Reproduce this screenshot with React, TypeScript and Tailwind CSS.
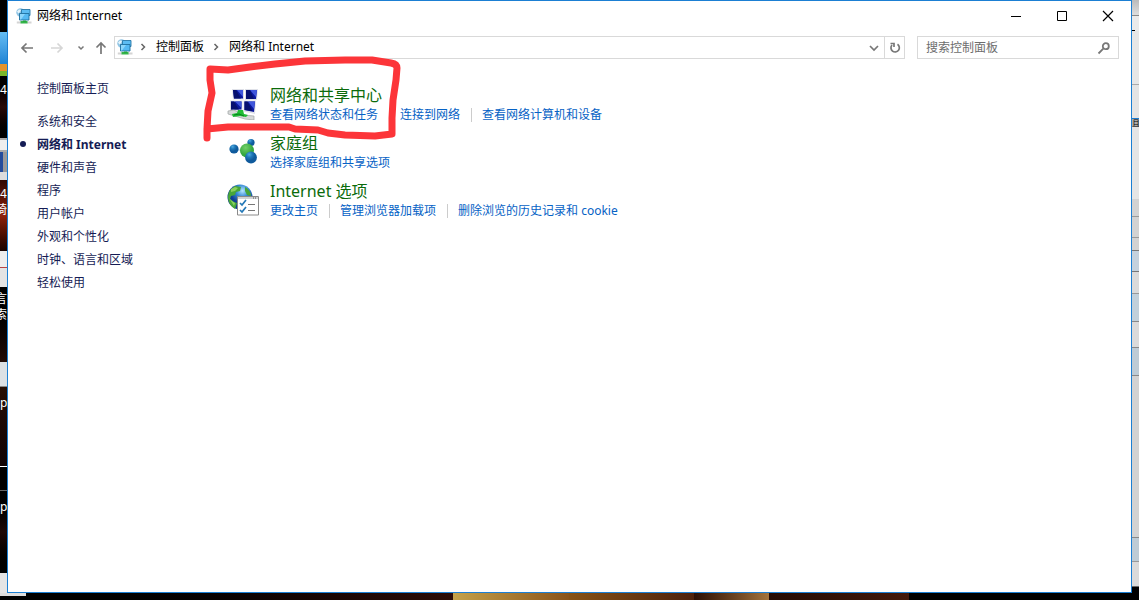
import type { ReactNode } from "react";

function NetworkIcon() {
  return (
    <svg viewBox="0 0 16 16" className="size-4 shrink-0" aria-hidden="true">
      <circle cx="4.5" cy="4.5" r="4.2" fill="#8fc4e4" />
      <path d="M1 3.5 3 1.5l2 .6-1 1.8-1.600 1.500zM3 6.500h2v1.500z" fill="#e6f4fb" />
      <path d="M.8 13.500h4v2h-4zM11 13.500h4.500v2H11z" fill="#d4d4d4" />
      <path d="M4.500 13h7v2.500h-7z" fill="#35b44a" />
      <path d="M5.500 1.500h8.500v6H5.500z" fill="#5cbcf2" stroke="#2878a8" strokeWidth=".9" />
      <path d="M3.500 5.500h9.500v6.500H3.500z" fill="#55b9f2" stroke="#20709f" strokeWidth=".9" />
      <path d="M4 6h5l-4 5.500H4z" fill="#8cd6fb" />
      <path d="M7 12.500h3V14H7z" fill="#27a83f" />
    </svg>
  );
}

function SharingCenterIcon() {
  return (
    <svg viewBox="0 2 32 32" className="size-8 shrink-0" aria-hidden="true">
      <path d="M5 3h12v10.500H6zM18 3h13l-1 11H18zM3 14.500h12.500V25H3zM16.500 14.500H29L28 28l-11.500-2.500z" fill="#dfe1e8" />
      <path d="M6 4h10v8.500H7zM19 4h11l-1 9H19zM4 15.500h10.500v8H4zM17.500 15.500H28l-1 10.500-9.500-2z" fill="#0a189f" />
      <path d="m10 4 6 0v7zM23 4h7l-1 7zM8 15.500h6.500V22zM21 15.500h7l-1 7.500z" fill="#3f56dc" />
      <path d="m6 4 3 0 5 8.500H7zM19 4l4 0 4 9h-8zM4 15.500h3l5 8H4zM17.500 15.500h3l5 9.500-8-1z" fill="#06106f" />
      <path d="m1 25 6-1 9 5 11 1v4l-9-1L1 28z" fill="#d6d8d8" stroke="#9fa4a4" strokeWidth=".7" />
      <path d="m5 28 5-1 1-3h5l1 4 4 1-2 2-6-1-7 1z" fill="#20bd35" />
      <path d="m7 29 5-1 5 2" stroke="#08801c" fill="none" />
    </svg>
  );
}

function HomegroupIcon() {
  return (
    <svg viewBox="0 0 32 32" className="size-8 shrink-0" aria-hidden="true">
      <defs>
        <radialGradient id="hg-blue" cx=".35" cy=".25">
          <stop offset="0" stopColor="#4fa9df" />
          <stop offset=".5" stopColor="#1f78b8" />
          <stop offset="1" stopColor="#0f5a9c" />
        </radialGradient>
        <radialGradient id="hg-green" cx=".4" cy=".3">
          <stop offset="0" stopColor="#73cf68" />
          <stop offset="1" stopColor="#35a83f" />
        </radialGradient>
      </defs>
      <path d="m7 13 12 2 5-9M19 15l6 7" stroke="#d5e9ef" strokeWidth="2" fill="none" />
      <circle cx="7" cy="13" r="4.600" fill="url(#hg-blue)" />
      <circle cx="24" cy="6.500" r="3.600" fill="url(#hg-blue)" />
      <circle cx="20" cy="14.500" r="7" fill="url(#hg-green)" />
      <circle cx="24" cy="21.500" r="5.900" fill="url(#hg-blue)" />
    </svg>
  );
}

function InternetOptionsIcon() {
  return (
    <svg viewBox="0 0 32 32" className="size-8 shrink-0" aria-hidden="true">
      <defs>
        <radialGradient id="globe" cx=".6" cy=".25">
          <stop offset="0" stopColor="#b8e8ff" />
          <stop offset=".5" stopColor="#3689d5" />
          <stop offset="1" stopColor="#103e92" />
        </radialGradient>
      </defs>
      <circle cx="13" cy="13" r="12.500" fill="url(#globe)" />
      <path d="m3 6 5-4 6 1-1 4-4 1-1 3-4 1-1 3 4 3 3 1-2 6C3 22 1 17 1 13c0-3 1-5 2-7ZM18 3c4 2 6 6 6 9l-4-1-2-4z" fill="#47a638" />
      <path d="m4 5 4-2 3 1-3 3-4 1zM2 14l3 3 3 2-1 3z" fill="#8bd15c" />
      <path d="M10.500 12.500h21v18.500h-21z" fill="#fff" stroke="#8a8a8a" />
      <path d="M11 13h20v2H11z" fill="#d1d3d5" />
      <path d="M26 14h1M28 14h1" stroke="#555" />
      <path d="m13 19 2 2 4-5M13 26l2 2 4-5" fill="none" stroke="#2378b7" strokeWidth="1.700" />
      <path d="M21 20.500h7M21 26.500h7" stroke="#777" strokeWidth="1" />
    </svg>
  );
}

function Glyph({ d, className = "", width = 1.7 }: { d: string; className?: string; width?: number }) {
  return (
    <svg viewBox="0 0 16 16" className={`size-4 shrink-0 ${className}`} fill="none" stroke="currentColor" strokeWidth={width} aria-hidden="true">
      <path d={d} />
    </svg>
  );
}

const crumbArrow = "m6.500 5 3 3-3 3";

const navigation = [
  "系统和安全",
  "网络和 Internet",
  "硬件和声音",
  "程序",
  "用户帐户",
  "外观和个性化",
  "时钟、语言和区域",
  "轻松使用",
];

const categories: { title: string; icon: ReactNode; links: string[] }[] = [
  { title: "网络和共享中心", icon: <SharingCenterIcon />, links: ["查看网络状态和任务", "连接到网络", "查看网络计算机和设备"] },
  { title: "家庭组", icon: <HomegroupIcon />, links: ["选择家庭组和共享选项"] },
  { title: "Internet 选项", icon: <InternetOptionsIcon />, links: ["更改主页", "管理浏览器加载项", "删除浏览的历史记录和 cookie"] },
];

function RedMarker() {
  return (
    <svg viewBox="200 54 204 92" className="pointer-events-none absolute -top-[5px] left-[192px] h-[92px] w-[204px]" aria-hidden="true">
      <path
        d="M207 138 207 129 208 111 212 93 210 80 210 69 228 70 250 67 275 64 305 61 345 60 372 60 391 63Q397 64 397 68L396 80 393 100 392 118 392 134 375 136 345 135 328 133 318 130 295 129 289 127 228 127 207 129"
        fill="none"
        stroke="#fc3539"
        strokeWidth="7"
        strokeLinecap="round"
        strokeLinejoin="round"
      />
    </svg>
  );
}

function DesktopLeft() {
  return (
    <div className="flex w-[7px] shrink-0 flex-col overflow-hidden bg-black text-[12px] leading-[16px] text-white">
      <div className="h-8 shrink-0" />
      <div className="h-8 shrink-0 bg-linear-to-b from-[#65bdf3] to-[#1c83d4]" />
      <div className="h-[7px] shrink-0 bg-[#e5932a]" />
      <div className="h-[5px] shrink-0 bg-[#79b72b]" />
      <div className="h-[62px] shrink-0 bg-linear-to-b from-black via-[#290a06] to-black pt-1.5">4</div>
      <div className="h-[14px] shrink-0 border-y-2 border-[#aaa] bg-[#eee]" />
      <div className="h-5 shrink-0 border-r-4 border-[#999] bg-[#244c9c]" />
      <div className="h-2 shrink-0 bg-[#ddd]" />
      <div className="h-[71px] shrink-0 bg-linear-to-b from-[#300803] via-[#8f210c] to-[#180300] pt-1.5">
        <p>4</p>
        <p className="flex justify-end">琦</p>
      </div>
      <div className="h-[17px] shrink-0 border-b border-[#b84444] bg-[#eee]" />
      <div className="h-[19px] shrink-0 bg-[#e4e4e4]" />
      <div className="h-[75px] shrink-0 bg-linear-to-b from-black to-[#220c07] pt-1">
        <p className="flex justify-end">言</p>
        <p className="flex justify-end">索</p>
      </div>
      <div className="h-[25px] shrink-0 border-b border-[#888] bg-[#dce1e5]" />
      <div className="h-[79px] shrink-0 bg-linear-to-b from-[#260f05] to-[#100303] pt-2">p</div>
      <div className="h-[25px] shrink-0 border-y border-t-white border-b-[#666] bg-black" />
      <div className="h-[82px] shrink-0 bg-linear-to-b from-black via-[#1e0807] to-black pt-2">p</div>
      <div className="grow bg-[#e5e5e5]" />
    </div>
  );
}

function DesktopRight() {
  return (
    <div className="flex w-[7px] shrink-0 flex-col overflow-hidden bg-[#d2d2d2]">
      <div className="h-4 shrink-0 border-b border-[#888] bg-linear-to-b from-[#bbb] to-[#ddd]" />
      <div className="h-[15px] shrink-0 bg-[#eaeaea] pt-[14px]"><div className="h-px w-[3px] bg-black" /></div>
      <div className="h-[54px] shrink-0 border-b border-[#aaa] bg-[#e6e6e6]" />
      <div className="h-[34px] shrink-0 border-b border-[#1b7bcf] bg-[#e4e4e4]" />
      <div className="h-2 shrink-0 overflow-hidden bg-[#aaa] text-[8px] leading-[8px]">且</div>
      <div className="h-[72px] shrink-0 bg-[#e5e5e5]" />
      <div className="h-[18px] shrink-0 border-b border-[#999]" />
      <div className="h-[21px] shrink-0 border-b border-[#999]" />
      <div className="h-[13px] shrink-0 border-b border-[#777]" />
      <div className="h-[21px] shrink-0 border-b border-[#777] bg-[#c4d1dd]" />
      <div className="h-[22px] shrink-0 border-b border-[#999] bg-[#dadada]" />
      <div className="h-7 shrink-0 border-b border-[#888] bg-[#c2d0da]" />
      <div className="h-[26px] shrink-0 border-b border-[#888] bg-[#dadada]" />
      <div className="h-7 shrink-0 border-b border-[#888] bg-[#bdcbd5]" />
      <div className="h-[162px] shrink-0 border-b border-[#888]" />
      <div className="h-6 shrink-0 border-b border-[#999] bg-[#bdcbd5]" />
      <div className="h-[25px] shrink-0 border-b border-[#666] bg-[#dadada]" />
      <div className="grow bg-black" />
    </div>
  );
}

export default function App() {
  return (
    <div className="flex h-screen flex-col bg-black font-['Noto_Sans','Noto_Sans_CJK_SC',sans-serif] text-[12px]">
      <div className="flex min-h-0 flex-1">
        <DesktopLeft />
        <div className="flex min-w-0 flex-1 flex-col border border-[#1b7fd3] bg-white">
          <header className="flex h-[35px] shrink-0 items-start">
            <div className="flex h-[29px] flex-1 items-center pl-2">
              <NetworkIcon />
              <h1 className="ml-[5px] text-black">网络和 Internet</h1>
            </div>
            <div className="flex h-[29px] text-black">
              <button aria-label="最小化" className="flex w-[46px] items-center justify-center">
                <Glyph d="M3 8.500h10" width={1} />
              </button>
              <button aria-label="最大化" className="flex w-[46px] items-center justify-center">
                <Glyph d="M3.500 3.500h9v9h-9z" width={1} />
              </button>
              <button aria-label="关闭" className="flex w-[46px] items-center justify-center">
                <Glyph d="m3 3 10 10M13 3 3 13" width={1.2} />
              </button>
            </div>
          </header>

          <nav className="flex h-[23px] shrink-0 items-stretch pr-3" aria-label="地址栏">
            <div className="flex w-[106px] items-center pl-[11px] text-[#777]">
              <button aria-label="后退"><Glyph d="M14 8H3m4.500-4.500L3 8l4.500 4.500" /></button>
              <button aria-label="前进" className="ml-3.5 text-[#d6d6d6]"><Glyph d="M2 8h11M8.500 3.500 13 8l-4.500 4.500" /></button>
              <button aria-label="最近的位置" className="ml-2"><Glyph d="m5.500 6.500 2.500 2.500 2.500-2.500" width={1.5} /></button>
              <button aria-label="向上" className="ml-1"><Glyph d="M8 14V3M3.500 7.500 8 3l4.500 4.500" /></button>
            </div>
            <div className="flex flex-1 border border-[#d9d9d9]">
              <div className="flex flex-1 items-center pb-0.5 pl-0.5 text-black">
                <NetworkIcon />
                <Glyph d={crumbArrow} className="ml-0.5 text-[#666]" width={1.5} />
                <a href="#control-panel" className="ml-[5px]">控制面板</a>
                <Glyph d={crumbArrow} className="ml-1 text-[#666]" width={1.5} />
                <a href="#network" className="ml-[5px]">网络和 Internet</a>
              </div>
              <button aria-label="展开地址" className="flex w-[18px] items-center text-[#777]"><Glyph d="m4 6 4 4 4-4" /></button>
              <button aria-label="刷新" className="flex w-5 items-center justify-center border-l border-[#d9d9d9] text-[#777]">
                <Glyph d="M10.500 4.300A4.200 4.200 0 1 1 5 5M3.500 3.500H7V7" width={1.7} />
              </button>
            </div>
            <label className="ml-3 flex w-[202px] items-center border border-[#d9d9d9] pr-1.5 pl-2">
              <span className="sr-only">搜索控制面板</span>
              <input type="search" placeholder="搜索控制面板" className="h-[18px] min-w-0 flex-1 bg-transparent text-[12px] outline-none placeholder:text-[#6d6d6d]" />
              <Glyph d="M7.300 8.700 2.500 13.500M9.800 3.200a3 3 0 1 0 0 6 3 3 0 0 0 0-6Z" className="text-[#777]" width={1.8} />
            </label>
          </nav>

          <div className="relative flex flex-1">
            <aside className="w-[219px] shrink-0 pt-[18px] pl-[29px] leading-[23px] text-[#151c55]">
              <a href="#home">控制面板主页</a>
              <ul className="mt-[10px]">
                {navigation.map((name, index) => (
                  <li key={name} className="relative">
                    {index === 1 && <span className="absolute top-2 -left-[17px] size-[6px] rounded-full bg-[#151c55]" />}
                    <a href={`#section-${index}`} className={index === 1 ? "font-bold" : ""} aria-current={index === 1 ? "page" : undefined}>{name}</a>
                  </li>
                ))}
              </ul>
            </aside>
            <main className="min-w-0 flex-1 pt-[26px]">
              {categories.map((category) => (
                <section key={category.title} className="flex h-12">
                  <div className="pt-[3px]">{category.icon}</div>
                  <div className="ml-[11px]">
                    <h2 className="text-[16px] leading-5 text-[#0b6b0b]"><a href="#category">{category.title}</a></h2>
                    <ul className="flex pt-px text-[#0662c5]">
                      {category.links.map((link, index) => (
                        <li key={link} className={index > 0 ? "ml-[11px] flex h-[14px] items-center self-center border-l border-[#ccc] pl-[10px]" : "flex h-[18px] items-center"}>
                          <a href="#task" className="whitespace-nowrap">{link}</a>
                        </li>
                      ))}
                    </ul>
                  </div>
                </section>
              ))}
            </main>
            <RedMarker />
          </div>
        </div>
        <DesktopRight />
      </div>
      <div className="flex h-[7px] shrink-0">
        <div className="h-[3px] w-[26px] bg-[#ddd]" />
        <div className="flex-1 bg-linear-to-r from-black to-[#2c0d08]" />
        <div className="w-[116px] bg-linear-to-r from-[#c4a24a] to-[#8a541a]" />
        <div className="w-[125px] bg-linear-to-r from-[#875316] to-[#4d210c]" />
        <div className="w-[75px] bg-linear-to-r from-[#2c1006] to-[#a4743c]" />
        <div className="w-[140px] bg-linear-to-r from-[#240b04] to-[#43190b]" />
        <div className="w-[230px] bg-black" />
      </div>
    </div>
  );
}
